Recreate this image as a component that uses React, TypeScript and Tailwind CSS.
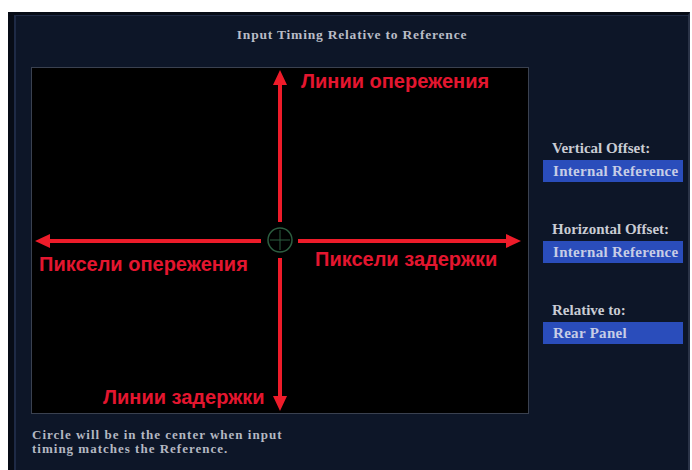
import React from "react";

const serif = { fontFamily: '"Liberation Serif", "DejaVu Serif", serif' };
const sans = { fontFamily: '"Liberation Sans", Arial, sans-serif' };

function Axes() {
  const red = "#ee1c2a";
  return (
    <svg className="absolute inset-0" width="497" height="346" viewBox="0 0 497 346">
      {/* vertical axis, split around the target circle */}
      <line x1="248" y1="14" x2="248" y2="154" stroke={red} strokeWidth="4" />
      <polygon points="248,2 241,17 255,17" fill={red} />
      <line x1="248" y1="190" x2="248" y2="331" stroke={red} strokeWidth="4" />
      <polygon points="248,343 241,328 255,328" fill={red} />
      {/* horizontal axis */}
      <line x1="16" y1="173" x2="229" y2="173" stroke={red} strokeWidth="4" />
      <polygon points="3,173 18,166 18,180" fill={red} />
      <line x1="266" y1="173" x2="477" y2="173" stroke={red} strokeWidth="4" />
      <polygon points="489,173 474,166 474,180" fill={red} />
      {/* target circle with crosshair */}
      <circle cx="248" cy="172" r="12" fill="none" stroke="#2c5e40" strokeWidth="1.5" />
      <line x1="248" y1="162" x2="248" y2="182" stroke="#2c5e40" strokeWidth="1" />
      <line x1="238" y1="172" x2="258" y2="172" stroke="#2c5e40" strokeWidth="1" />
    </svg>
  );
}

function Label({ text, x, y }: { text: string; x: number; y: number }) {
  return (
    <div
      className="absolute whitespace-nowrap text-[20px] font-bold leading-none text-[#e4162f]"
      style={{ ...sans, left: x, top: y }}
    >
      {text}
    </div>
  );
}

function Field({ label, value }: { label: string; value: string }) {
  return (
    <div className="flex flex-col">
      <div className="pl-[9px] text-[15px] font-bold leading-[16px] text-[#c9ccd4] whitespace-nowrap" style={serif}>
        {label}
      </div>
      <div
        className="mt-[4px] flex h-[22px] w-[140px] items-center overflow-hidden whitespace-nowrap bg-[#2a4dbb] pl-[10px] text-[15px] font-bold tracking-[0.3px] text-[#c7cde6]"
        style={serif}
      >
        {value}
      </div>
    </div>
  );
}

export default function App() {
  return (
    <div className="h-[470px] w-[692px] overflow-hidden bg-white">
      <div className="ml-[8px] mt-[12px] h-[458px] w-[682px] border-l-[6px] border-t-[3px] border-r-[2px] border-l-[#070c16] border-t-[#070c16] border-r-[#2a3347] bg-[#0d1628]">
        <div className="h-full border-l-[2px] border-t-[1px] border-[#1e2a45]">
          <div
            className="pt-[11px] text-center text-[13.5px] font-bold leading-[16px] tracking-[0.8px] text-[#b9bcc6]"
            style={serif}
          >
            Input Timing Relative to Reference
          </div>
          <div className="mt-[24px] flex">
            <div className="relative ml-[15px] h-[347px] w-[498px] border border-[#3a4150] bg-black">
              <Axes />
              <Label text="Линии опережения" x={269} y={3} />
              <Label text="Пиксели опережения" x={7} y={186} />
              <Label text="Пиксели задержки" x={283} y={181} />
              <Label text="Линии задержки" x={71} y={319} />
            </div>
            <div className="ml-[14px] flex flex-col pt-[73px]">
              <Field label="Vertical Offset:" value="Internal Reference" />
              <div className="h-[39px]" />
              <Field label="Horizontal Offset:" value="Internal Reference" />
              <div className="h-[39px]" />
              <Field label="Relative to:" value="Rear Panel" />
            </div>
          </div>
          <div
            className="ml-[16px] mt-[14px] text-[13px] font-bold leading-[14px] tracking-[1px] text-[#b4b8c2]"
            style={serif}
          >
            Circle will be in the center when input
            <br />
            timing matches the Reference.
          </div>
        </div>
      </div>
    </div>
  );
}
